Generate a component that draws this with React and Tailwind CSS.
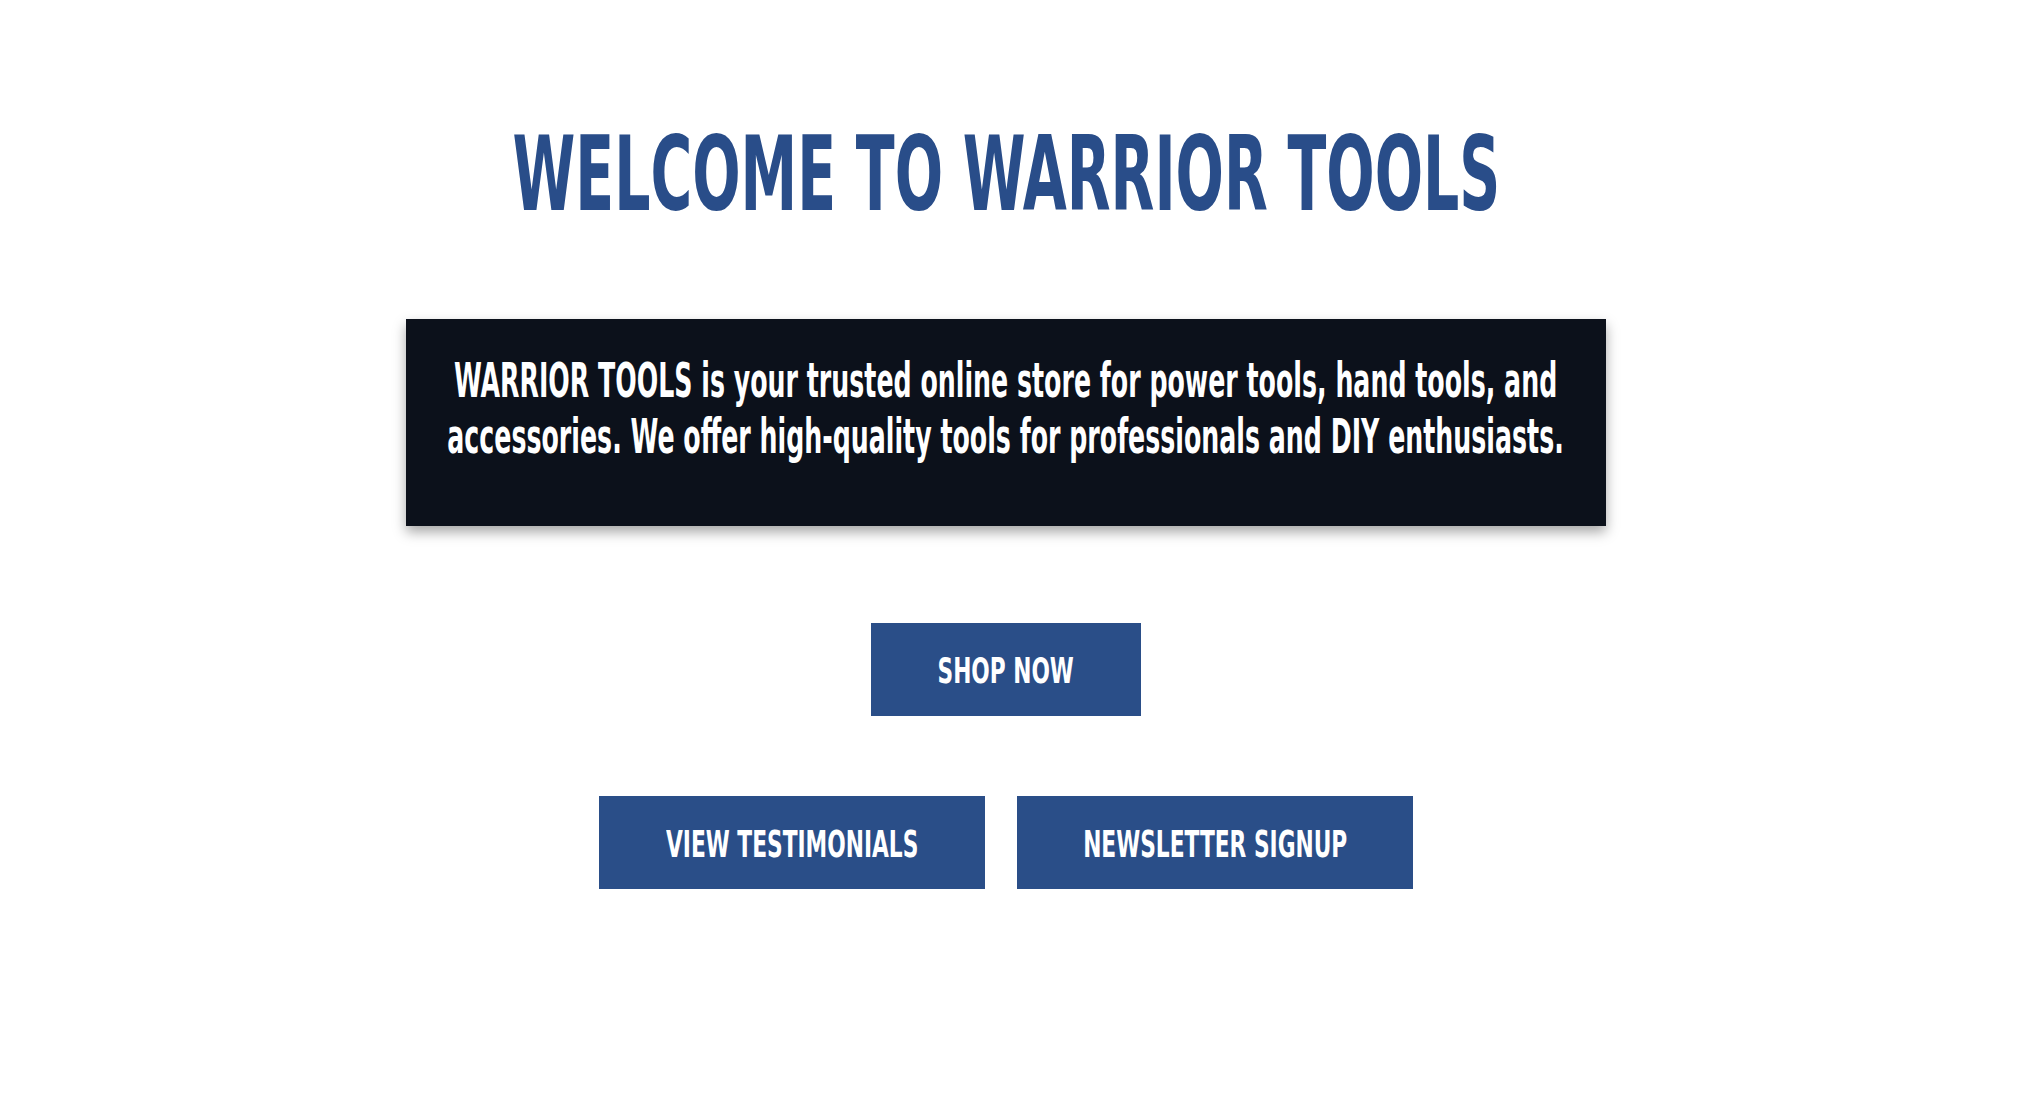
export default function App() {
  const font = { fontFamily: '"DejaVu Sans Condensed", "DejaVu Sans", sans-serif' }

  return (
    <div className="min-h-screen bg-white pr-[26px] overflow-hidden" style={font}>
      <div className="flex flex-col items-center">
        <h1 className="mt-[123px] text-[103px] leading-none font-bold uppercase text-[#294d89] whitespace-nowrap scale-x-[0.614]">
          Welcome to Warrior Tools
        </h1>

        <div className="mt-[93px] w-[1200px] flex justify-center bg-[#0c111b] pt-[34px] pb-[61px] shadow-[0_6px_12px_rgba(0,0,0,0.35)]">
          <p className="shrink-0 text-center text-[47.5px] leading-[56px] font-bold text-white whitespace-nowrap scale-x-[0.591]">
            WARRIOR TOOLS is your trusted online store for power tools, hand tools, and
            <br />
            accessories. We offer high-quality tools for professionals and DIY enthusiasts.
          </p>
        </div>

        <button className="mt-[97px] w-[270px] h-[93px] pt-[3px] flex items-center justify-center bg-[#2a4e88] text-white">
          <span className="shrink-0 whitespace-nowrap text-[36px] font-bold uppercase scale-x-[0.67]">Shop Now</span>
        </button>

        <div className="mt-[80px] flex gap-[32px]">
          <button className="w-[386px] h-[93px] pt-[5px] flex items-center justify-center bg-[#2a4e88] text-white">
            <span className="shrink-0 whitespace-nowrap text-[37px] font-bold uppercase scale-x-[0.653]">View Testimonials</span>
          </button>
          <button className="w-[396px] h-[93px] pt-[5px] flex items-center justify-center bg-[#2a4e88] text-white">
            <span className="shrink-0 whitespace-nowrap text-[37px] font-bold uppercase scale-x-[0.653]">Newsletter Signup</span>
          </button>
        </div>
      </div>
    </div>
  )
}
